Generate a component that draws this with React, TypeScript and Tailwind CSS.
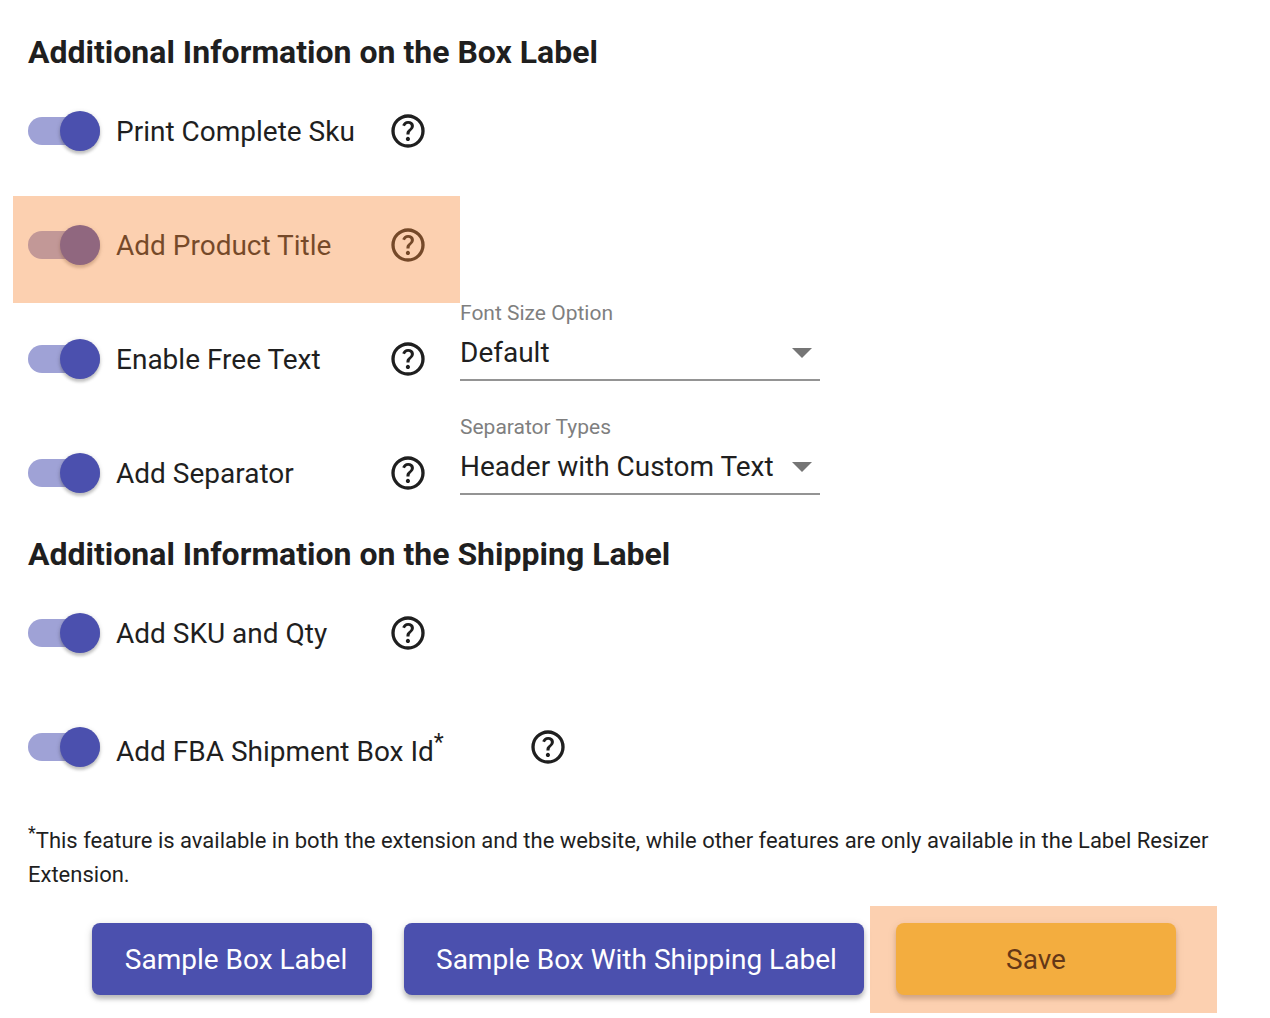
import React, { useState } from 'react';

interface ToggleRowProps {
  id: string;
  label: React.ReactNode;
  wide?: boolean;
  highlighted?: boolean;
  children?: React.ReactNode;
}

interface SelectFieldProps {
  id: string;
  label: string;
  options: string[];
}

function HelpIcon() {
  return (
    <svg width="40" height="40" viewBox="0 -960 960 960" fill="currentColor">
      <path d="M478-240q21 0 35.500-14.500T528-290q0-21-14.500-35.500T478-340q-21 0-35.500 14.500T428-290q0 21 14.500 35.500T478-240Zm-36-154h74q0-33 7.500-52t42.500-52q26-26 41-49.500t15-56.500q0-56-41-86t-97-30q-57 0-92.500 30T342-618l66 26q5-18 22.500-39t53.500-21q32 0 48 17.500t16 38.500q0 20-12 37.500T506-526q-44 39-54 59t-10 73Zm38 314q-83 0-156-31.500T197-197q-54-54-85.500-127T80-480q0-83 31.500-156T197-763q54-54 127-85.500T480-880q83 0 156 31.500T763-763q54 54 85.500 127T880-480q0 83-31.500 156T763-197q-54 54-127 85.500T480-80Zm0-80q134 0 227-93t93-227q0-134-93-227t-227-93q-134 0-227 93t-93 227q0 134 93 227t227 93Z" />
    </svg>
  );
}

function ToggleRow({ id, label, wide, highlighted, children }: ToggleRowProps) {
  const [checked, setChecked] = useState(true);

  return (
    <div className="flex h-[114px]">
      <div className="relative flex items-center pr-8">
        <div className={`flex items-center gap-4 ${wide ? 'w-[500px]' : 'w-[360px]'}`}>
          <input
            id={id}
            type="checkbox"
            checked={checked}
            onChange={(e) => setChecked(e.target.checked)}
            className="
              flex h-7 w-[72px] shrink-0 appearance-none items-center rounded-full bg-black/38 cursor-pointer
              checked:justify-end checked:bg-[#9fa2d6]
              before:size-10 before:shrink-0 before:rounded-full before:bg-[#fafafa]
              before:shadow-[0_3px_3px_rgba(0,0,0,0.18),0_1px_5px_rgba(0,0,0,0.14)]
              checked:before:bg-[#4b50ae]
            "
          />
          <label
            htmlFor={id}
            className={`text-[28px] leading-10 whitespace-nowrap cursor-pointer ${wide ? 'pt-2.5' : 'pt-0.5'}`}
          >
            {label}
          </label>
        </div>
        <button type="button" aria-label="Help" className="cursor-pointer">
          <HelpIcon />
        </button>
        {highlighted && (
          <span className="pointer-events-none absolute top-2 right-0 -bottom-px -left-[15px] bg-[#f78939]/40" />
        )}
      </div>
      {children}
    </div>
  );
}

function SelectField({ id, label, options }: SelectFieldProps) {
  return (
    <div className="flex w-[360px] flex-col gap-1">
      <label htmlFor={id} className="text-[21px] leading-[22px] text-[#7f7f7f]">
        {label}
      </label>
      <div className="relative">
        <select
          id={id}
          className="h-[53px] w-full appearance-none border-b-2 border-[#949494] bg-transparent pr-9 pb-0.5 text-[28px] text-[#1f1f1f] outline-none"
        >
          {options.map((option) => (
            <option key={option}>{option}</option>
          ))}
        </select>
        <svg
          width="20" height="10" viewBox="0 0 20 10" fill="#757575"
          className="pointer-events-none absolute top-5 right-2"
        >
          <path d="M0 0h20L10 10z" />
        </svg>
      </div>
    </div>
  );
}

const headingClass = 'pt-0.5 text-[32px] leading-[44px] font-bold';

const buttonClass =
  'h-[72px] rounded-lg pt-0.5 text-[28px] whitespace-nowrap cursor-pointer shadow-[0_4px_4px_rgba(0,0,0,0.2),0_2px_8px_rgba(0,0,0,0.14)]';

export default function App() {
  return (
    <main className="min-h-screen bg-white pt-7 pr-[30px] pb-[23px] pl-7 font-[Roboto,sans-serif] text-[#1f1f1f]">
      {/* Box label */}
      <section>
        <h2 className={headingClass}>Additional Information on the Box Label</h2>
        <ToggleRow id="complete-sku" label="Print Complete Sku" />
        <ToggleRow id="product-title" label="Add Product Title" highlighted />
        <ToggleRow id="free-text" label="Enable Free Text">
          <SelectField id="font-size" label="Font Size Option" options={['Default', 'Small', 'Large']} />
        </ToggleRow>
        <ToggleRow id="separator" label="Add Separator">
          <SelectField
            id="separator-type"
            label="Separator Types"
            options={['Header with Custom Text', 'Blank Label']}
          />
        </ToggleRow>
      </section>

      {/* Shipping label */}
      <section>
        <h2 className={headingClass}>Additional Information on the Shipping Label</h2>
        <ToggleRow id="sku-qty" label="Add SKU and Qty" />
        <ToggleRow
          id="fba-box-id"
          label={<>Add FBA Shipment Box Id<sup className="text-[23px]">*</sup></>}
          wide
        />
      </section>

      <p className="mt-5 text-[22px] leading-[34px]">
        <sup className="text-[18px]">*</sup>This feature is available in both the extension and the website, while
        other features are only available in the Label Resizer Extension.
      </p>

      {/* Actions */}
      <div className="mt-[31px] flex justify-center gap-8">
        <button type="button" className={`${buttonClass} w-[280px] pr-6 pl-8 bg-[#4b50ae] text-white`}>
          Sample Box Label
        </button>
        <button type="button" className={`${buttonClass} w-[460px] pr-7 pl-8 bg-[#4b50ae] text-white`}>
          Sample Box With Shipping Label
        </button>
        <div className="relative">
          <button type="button" className={`${buttonClass} w-[280px] px-8 bg-[#f1c544] text-black`}>
            Save
          </button>
          <span className="pointer-events-none absolute -top-[17px] -right-[41px] -bottom-[18px] -left-[26px] bg-[#f78939]/40" />
        </div>
      </div>
    </main>
  );
}
